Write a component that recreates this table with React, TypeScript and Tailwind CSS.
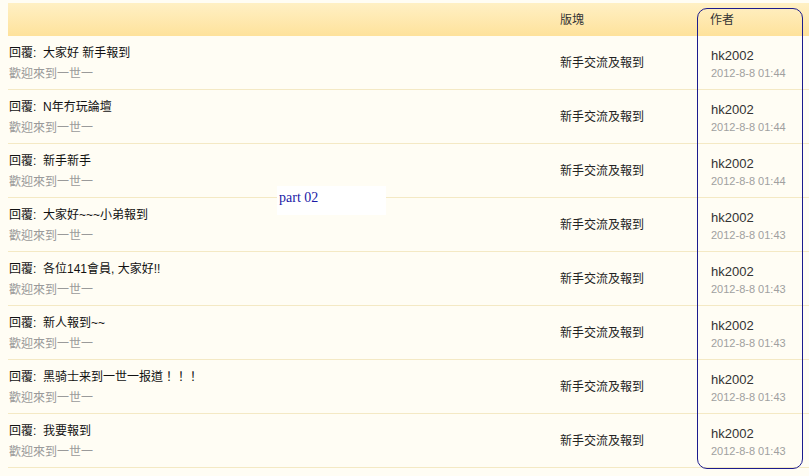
const rows = [
  { title: "回覆:  大家好 新手報到", time: "2012-8-8 01:44" },
  { title: "回覆:  N年冇玩論壇", time: "2012-8-8 01:44" },
  { title: "回覆:  新手新手", time: "2012-8-8 01:44" },
  { title: "回覆:  大家好~~~小弟報到", time: "2012-8-8 01:43" },
  { title: "回覆:  各位141會員, 大家好!!", time: "2012-8-8 01:43" },
  { title: "回覆:  新人報到~~", time: "2012-8-8 01:43" },
  { title: "回覆:  黑骑士来到一世一报道！！！", time: "2012-8-8 01:43" },
  { title: "回覆:  我要報到", time: "2012-8-8 01:43" },
];

const font = {
  fontFamily: '"Liberation Sans", "Noto Sans CJK TC", sans-serif',
};

export default function App() {
  return (
    <div
      className="relative w-[809px] h-[476px] overflow-hidden bg-[#fffdf4] pl-2 pt-[3px] text-[12px]"
      style={font}
    >
      {/* header */}
      <div className="flex h-[33px] items-center bg-gradient-to-b from-[#fff0c4] to-[#fee29b] text-[#333]">
        <div className="w-[552px]" />
        <div className="w-[150px]">版塊</div>
        <div>作者</div>
      </div>

      {rows.map((r, i) => (
        <div
          key={i}
          className="flex h-[54px] border-b border-[#f4e9c4] leading-none"
        >
          <div className="w-[552px] pl-[1px] pt-[11px]">
            <div className="text-[#111] whitespace-pre">{r.title}</div>
            <div className="mt-[9px] text-[#9a9a9a]">歡迎來到一世一</div>
          </div>
          <div className="flex w-[150px] items-center pt-[1px] text-[#222]">
            新手交流及報到
          </div>
          <div className="pl-[1px] pt-[13px]">
            <div className="text-[13px] text-[#333]">hk2002</div>
            <div className="mt-[6px] text-[11px] text-[#a0a0a0]">{r.time}</div>
          </div>
        </div>
      ))}

      {/* annotation overlay */}
      <div className="absolute left-[697px] top-[8px] h-[461px] w-[106px] rounded-[10px] border-[1.5px] border-[#1c1c8e]" />
      <div className="absolute left-[277px] top-[186px] flex h-[29px] w-[109px] items-center bg-white pl-[2px] pb-[6px]">
        <span
          className="text-[14px] text-[#1a1aa6]"
          style={{ fontFamily: '"Liberation Serif", serif' }}
        >
          part 02
        </span>
      </div>
    </div>
  );
}
